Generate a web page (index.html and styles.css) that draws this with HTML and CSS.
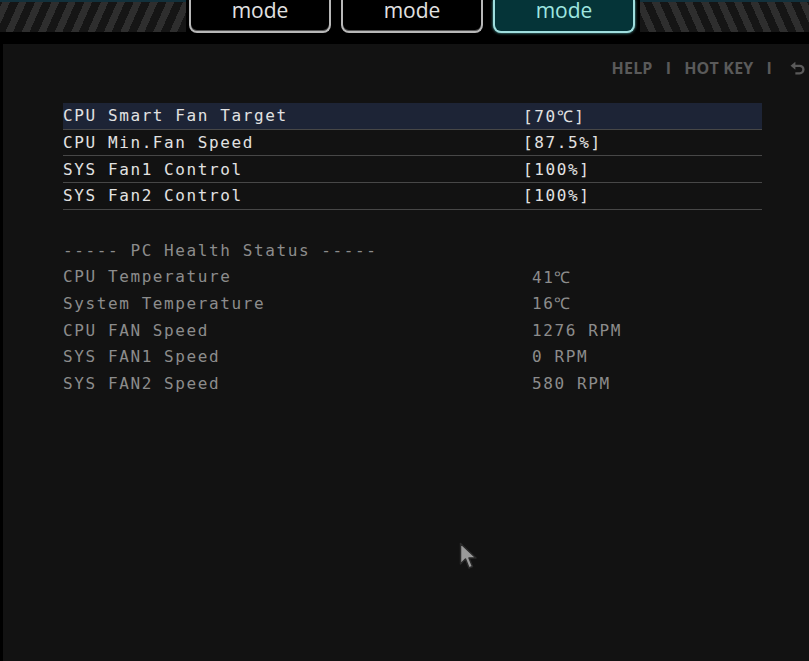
FILE: index.html
```html
<!DOCTYPE html>
<html lang="en">
<head>
<meta charset="UTF-8">
<title>Hardware Monitor</title>
<link rel="stylesheet" href="styles.css">
</head>
<body>
  <!-- top bar with mode tabs -->
  <div class="topbar">
    <div class="stripes left"></div>
    <div class="tabs">
      <div class="tab">mode</div>
      <div class="tab">mode</div>
      <div class="tab active">mode</div>
    </div>
    <div class="stripes right"></div>
  </div>

  <div class="panel">
    <div class="toolbar">
      <span>HELP</span>
      <span class="sep">I</span>
      <span>HOT KEY</span>
      <span class="sep">I</span>
      <svg class="back" width="15" height="15" viewBox="0 0 14 14">
        <path d="M2.5 4.5 H9 A3.5 3.5 0 0 1 9 11.5 H5" fill="none" stroke="#5a5a5a" stroke-width="2.2"/>
        <path d="M0.5 4.5 L5 0.8 L5 8.2 Z" fill="#5a5a5a"/>
      </svg>
    </div>

    <div class="list">
      <div class="row selected"><span>CPU Smart Fan Target</span><span>[70℃]</span></div>
      <div class="row"><span>CPU Min.Fan Speed</span><span>[87.5%]</span></div>
      <div class="row"><span>SYS Fan1 Control</span><span>[100%]</span></div>
      <div class="row"><span>SYS Fan2 Control</span><span>[100%]</span></div>
    </div>

    <div class="health">
      <div class="hrow"><span>----- PC Health Status -----</span><span></span></div>
      <div class="hrow"><span>CPU Temperature</span><span>41℃</span></div>
      <div class="hrow"><span>System Temperature</span><span>16℃</span></div>
      <div class="hrow"><span>CPU FAN Speed</span><span>1276 RPM</span></div>
      <div class="hrow"><span>SYS FAN1 Speed</span><span>0 RPM</span></div>
      <div class="hrow"><span>SYS FAN2 Speed</span><span>580 RPM</span></div>
    </div>

    <!-- mouse pointer -->
    <svg class="pointer" width="20" height="30" viewBox="0 0 20 30">
      <path d="M1.5 1.5 L1.5 22 L6.5 17 L10 26 L13.5 24.5 L10 16 L17 16 Z" fill="#9a9a9a" stroke="#2a2a2a" stroke-width="1.5" stroke-linejoin="round"/>
    </svg>
  </div>
</body>
</html>
```

FILE: styles.css
```css
html, body {
  height: 100%;
}

body {
  margin: 0;
  background: #000;
  display: flex;
  flex-direction: column;
  overflow: hidden;
  font-family: "DejaVu Sans Mono", monospace;
}

/* top bar */
.topbar {
  height: 33px;
  display: flex;
  flex-shrink: 0;
  margin-bottom: 11px;
}

.stripes {
  border-top: 2px solid #12313c;
  margin-bottom: 1px;
}

.stripes.left {
  width: 186px;
  background: repeating-linear-gradient(-66deg, #151515 0 8px, #2e2e2e 8px 15px);
}

.stripes.right {
  flex: 1;
  background: repeating-linear-gradient(66deg, #151515 0 8px, #2e2e2e 8px 15px);
}

.tabs {
  display: flex;
  gap: 10px;
  padding: 0 5px 0 3px;
  background: #000;
}

.tab {
  width: 138px;
  height: 31px;
  border: 2px solid #b8b8b8;
  border-top: none;
  border-radius: 0 0 8px 8px;
  background: #000;
  color: #e2e2e2;
  font-family: "Open Sans", "Liberation Sans", sans-serif;
  font-size: 21px;
  line-height: 20px;
  text-align: center;
  box-shadow: inset 0 -1px 0 #555;
}

.tab.active {
  background: #053438;
  border-color: #9fdede;
  color: #9fe6e0;
  box-shadow: 0 0 3px #5fb8b8;
}

/* main panel */
.panel {
  flex: 1;
  margin-left: 3px;
  background: #121212;
  position: relative;
  padding: 0 47px 0 60px;
}

.toolbar {
  display: flex;
  justify-content: flex-end;
  align-items: center;
  gap: 13px;
  margin-right: -43px;
  height: 48px;
  color: #5a5a5a;
  font-family: "Open Sans", "Liberation Sans", sans-serif;
  font-weight: 700;
  font-size: 16px;
  letter-spacing: 0.2px;
}

.back {
  margin-left: 5px;
}

.list {
  margin-top: 11px;
}

.row, .hrow {
  display: grid;
  grid-template-columns: 460px 1fr;
  box-sizing: border-box;
  height: 26.7px;
  align-items: center;
  font-size: 16px;
  letter-spacing: 1.6px;
  color: #e2e2e2;
  white-space: pre;
}

.row {
  border-bottom: 1px solid #474747;
}

.row.selected {
  background: #1d2436;
}

.health {
  margin-top: 27px;
  margin-right: 180px;
}

.hrow {
  grid-template-columns: 469px 1fr;
  color: #8c8c8c;
}

.pointer {
  position: absolute;
  left: 456px;
  top: 498px;
}
```
